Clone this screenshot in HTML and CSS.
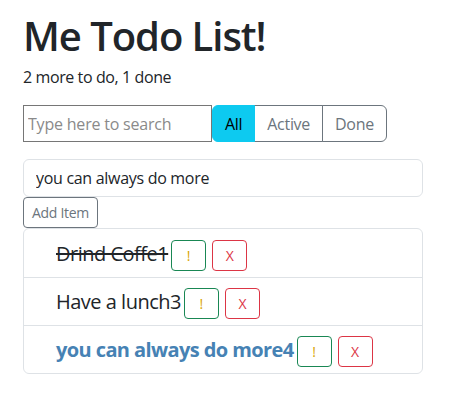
FILE: index.html
```html
<!DOCTYPE html>
<html lang="en">
<head>
<meta charset="utf-8">
<title>Me Todo List!</title>
<link rel="stylesheet" href="styles.css">
</head>
<body>
<div class="app">
  <h1 class="title">Me Todo List!</h1>
  <p class="summary">2 more to do, 1 done</p>
  <div class="filter-row">
    <input class="search" type="text" placeholder="Type here to search">
    <div class="btn-group">
      <button class="btn btn-info">All</button>
      <button class="btn btn-outline">Active</button>
      <button class="btn btn-outline">Done</button>
    </div>
  </div>
  <form class="add-form">
    <input class="add-input" type="text" value="you can always do more">
    <button class="btn-sm" type="button">Add Item</button>
  </form>
  <ul class="list">
    <li class="item"><span class="label done">Drind Coffe1</span><button class="act act-imp">!</button><button class="act act-del">X</button></li>
    <li class="item"><span class="label">Have a lunch3</span><button class="act act-imp">!</button><button class="act act-del">X</button></li>
    <li class="item"><span class="label important">you can always do more4</span><button class="act act-imp">!</button><button class="act act-del">X</button></li>
  </ul>
</div>
</body>
</html>
```
FILE: styles.css
```css
* { box-sizing: border-box; }
body {
  margin: 0;
  font-family: "Open Sans", "Noto Sans", sans-serif;
  color: #212529;
  background: #fff;
}
.app {
  width: 400px;
  margin-left: 23px;
}
.title {
  margin: 0;
  padding-top: 12px;
  font-size: 40px;
  font-weight: 600;
  line-height: 48px;
  letter-spacing: -1.05px;
  color: #212529;
}
.summary {
  margin: 5px 0 0;
  font-size: 16px;
  line-height: 24px;
  letter-spacing: -0.4px;
}
.filter-row {
  display: flex;
  margin-top: 16px;
  height: 37px;
}
.search {
  width: 189px;
  height: 37px;
  border: 1px solid #767676;
  border-radius: 0;
  padding: 0 4px;
  font-family: inherit;
  font-size: 16px;
  letter-spacing: -0.2px;
  color: #212529;
  outline: none;
}
.search::placeholder { color: #8a8a8a; }
.btn-group { display: flex; }
.btn {
  height: 37px;
  font-family: inherit;
  font-size: 16px;
  letter-spacing: -0.3px;
  padding: 0 12px;
  background: #fff;
  border: 1px solid #6c757d;
  color: #6c757d;
  margin: 0;
}
.btn + .btn { margin-left: -1px; }
.btn-info {
  background: #0dcaf0;
  border-color: #0dcaf0;
  color: #000;
  border-radius: 6px 0 0 6px;
  position: relative;
  z-index: 1;
}
.btn:last-child { border-radius: 0 6px 6px 0; }
.add-form {
  margin-top: 17px;
  display: flex;
  flex-direction: column;
  align-items: flex-start;
}
.add-input {
  width: 400px;
  height: 38px;
  border: 1px solid #dee2e6;
  border-radius: 6px;
  padding: 0 12px;
  font-family: inherit;
  font-size: 16px;
  letter-spacing: -0.3px;
  color: #212529;
  outline: none;
}
.btn-sm {
  height: 31px;
  padding: 0 8px;
  font-family: inherit;
  font-size: 14px;
  letter-spacing: -0.3px;
  color: #6c757d;
  background: #fff;
  border: 1px solid #6c757d;
  border-radius: 4px;
}
.list {
  list-style: none;
  margin: 0;
  padding: 0;
  border: 1px solid #dee2e6;
  border-radius: 6px;
}
.item {
  display: flex;
  align-items: center;
  height: 48px;
  padding: 0 16px 0 32px;
  font-size: 20px;
  letter-spacing: -0.5px;
  border-top: 1px solid #dee2e6;
}
.item:first-child { border-top: none; height: 48px; }
.label { margin-right: 3px; }
.done { text-decoration: line-through; }
.important { font-weight: 700; color: #4682b4; letter-spacing: -0.6px; }
.act {
  width: 35px;
  height: 31px;
  margin-top: 4px;
  font-family: inherit;
  font-size: 14px;
  letter-spacing: 0;
  background: #fff;
  border-radius: 4px;
  padding: 0;
}
.act-imp { border: 1px solid #198754; color: #d9a400; margin-right: 6px; }
.act-del { border: 1px solid #dc3545; color: #dc3545; }
```
